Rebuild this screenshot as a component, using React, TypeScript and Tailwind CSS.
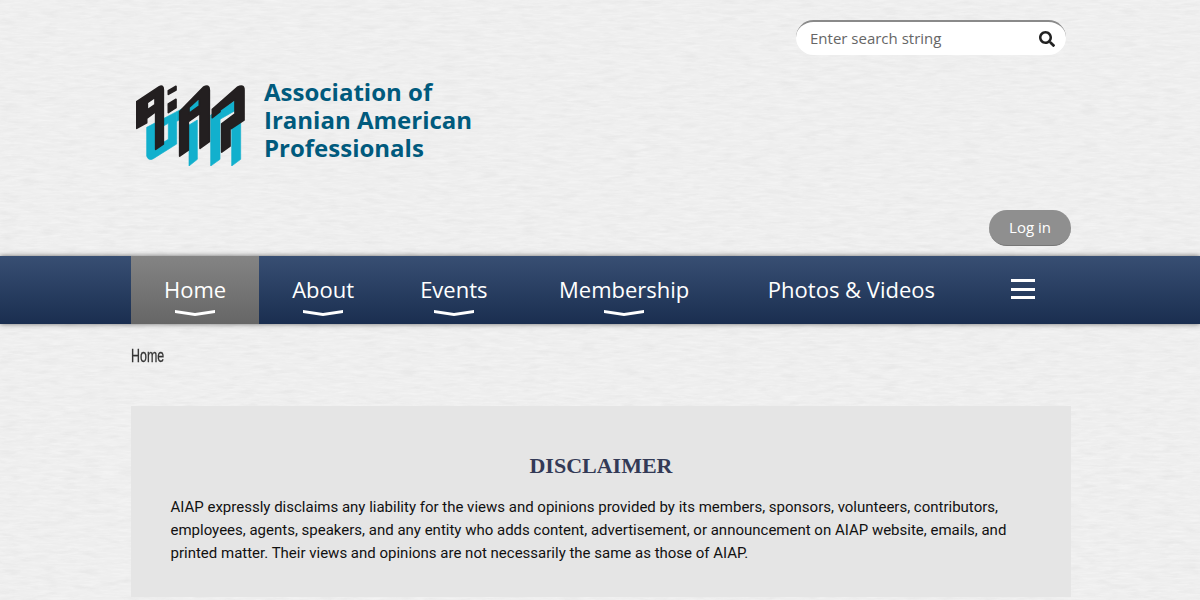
import { FaSearch } from "react-icons/fa";

const open = { fontFamily: '"Open Sans", sans-serif' };

function Chevron() {
  return (
    <svg width="40" height="6" viewBox="0 0 40 6" className="block">
      <polygon points="0,0 20,3 40,0 40,3 20,6 0,3" fill="#fff" />
    </svg>
  );
}

function Logo() {
  return (
    <svg width="109" height="82" viewBox="48 42 327 246" className="block shrink-0">
      <g fill="#12b0cd" stroke="#12b0cd" strokeWidth="2" strokeLinejoin="round">
        <path fillRule="evenodd" d="M80 172 L170 125 V222 L100 266 Q85 274 80 258 Z M105 182 V232 L145 208 V160 Z" />
        <polygon points="170,125 240,88 240,116 170,154" />
        <polygon points="207,165 232,150 232,268 207,288" />
        <polygon points="272,135 300,118 300,268 272,288" />
        <polygon points="300,120 345,92 345,122 300,148" />
        <polygon points="335,175 362,155 362,268 335,288" />
      </g>
      <g fill="#231f20" stroke="#231f20" strokeWidth="5" strokeLinejoin="round">
        <path fillRule="evenodd" d="M50 95 L118 50 Q130 44 130 60 V222 L107 238 V125 L80 145 V158 L50 175 Z M82 98 V120 L105 104 V82 Z" />
        <polygon points="145,62 168,49 168,60 145,73" />
        <polygon points="145,102 168,88 168,113 145,128" />
        <path fillRule="evenodd" d="M179 125 L250 52 Q268 42 268 60 V215 L240 235 V130 L205 155 V240 L179 258 Z M207 112 V130 L238 108 V84 Z" />
        <path d="M277 118 L352 52 Q372 42 372 60 V150 L330 178 V228 L305 246 V162 L345 132 V88 L300 120 V125 L277 143 Z" />
      </g>
    </svg>
  );
}

const items = [
  { t: "Home", active: true, chev: true, cls: "" },
  { t: "About", chev: true, cls: "" },
  { t: "Events", chev: true, cls: "" },
  { t: "Membership", chev: true, cls: "ml-[5.5px]" },
  { t: "Photos & Videos", chev: false, cls: "ml-[12.5px]" },
];

export default function App() {
  return (
    <div className="relative isolate h-[600px] w-full overflow-hidden bg-[#eeeeee]">
      <svg className="absolute inset-0 -z-10 h-full w-full" aria-hidden="true">
        <filter id="paper">
          <feTurbulence type="fractalNoise" baseFrequency="0.06 0.45" numOctaves="4" seed="7" />
          <feColorMatrix values="0 0 0 0 1  0 0 0 0 1  0 0 0 0 1  0.7 0 0 0 -0.28" />
        </filter>
        <filter id="paper2">
          <feTurbulence type="fractalNoise" baseFrequency="0.05 0.2" numOctaves="3" seed="21" />
          <feColorMatrix values="0 0 0 0 0.6  0 0 0 0 0.6  0 0 0 0 0.6  0.45 0 0 0 -0.22" />
        </filter>
        <rect width="100%" height="100%" filter="url(#paper)" />
        <rect width="100%" height="100%" filter="url(#paper2)" />
      </svg>

      <header className="ml-[131px] h-[256px] w-[940px] pt-[20px]" style={open}>
        <div className="flex justify-end pr-[5px]">
          <div className="flex h-[35px] w-[270px] items-center justify-between rounded-[18px] border-t-2 border-[#8a8a8a] bg-white pl-[14px] pr-[11px]">
            <span className="text-[15px] text-[#666666]">Enter search string</span>
            <FaSearch className="text-[16px] text-[#222222]" />
          </div>
        </div>
        <div className="mt-[29px] flex items-start pl-[5px]">
          <Logo />
          <div className="ml-[19px] mt-[-6px] text-[24px] font-bold leading-[28px] text-[#005a7d]">
            Association of
            <br />
            Iranian American
            <br />
            Professionals
          </div>
        </div>
        <div className="mt-[44px] flex justify-end">
          <div className="flex h-[36px] w-[82px] items-center justify-center rounded-[18px] border-b border-[#777777] bg-[#8f8f8f] text-[15px] text-white">
            Log in
          </div>
        </div>
      </header>

      <nav className="h-[68px] bg-gradient-to-b from-[#384f73] to-[#1a2e50] shadow-[0_0_5px_rgba(0,0,0,0.55)]" style={open}>
        <div className="ml-[131px] flex h-full w-[940px]">
          {items.map((i) => (
            <div
              key={i.t}
              className={`flex h-full flex-col items-center px-[33px] pt-[18px] ${i.cls} ${
                i.active ? "bg-gradient-to-b from-[#848484] to-[#666666]" : ""
              }`}
            >
              <span className="text-[22px] leading-[30px] text-white">{i.t}</span>
              {i.chev && (
                <span className="mt-[6px]">
                  <Chevron />
                </span>
              )}
            </div>
          ))}
          <div className="ml-[43px] mt-[23px] flex h-[20px] w-[24px] flex-col justify-between">
            <span className="h-[3px] bg-white" />
            <span className="h-[3px] bg-white" />
            <span className="h-[3px] bg-white" />
          </div>
        </div>
      </nav>

      <main className="ml-[131px] w-[940px]">
        <div
          className="mt-[20px] h-[24px] text-[18px] font-medium leading-[24px] text-[#333333]"
          style={{ fontFamily: '"Liberation Sans", sans-serif', WebkitTextStroke: "0.3px #333333" }}
        >
          <span className="inline-block origin-left scale-x-[0.69]">Home</span>
        </div>
        <section className="mt-[38px] h-[191px] bg-[#e5e5e5] px-[39.5px] pt-[46px]">
          <h1
            className="text-center text-[22px] font-bold leading-[28px] text-[#333a56]"
            style={{ fontFamily: '"Liberation Serif", serif' }}
          >
            DISCLAIMER
          </h1>
          <p
            className="mt-[16px] text-[15px] leading-[23px] text-[#111111]"
            style={{ fontFamily: "Roboto, sans-serif" }}
          >
            AIAP expressly disclaims any liability for the views and opinions provided by its members, sponsors, volunteers, contributors, employees, agents, speakers, and any entity who adds content, advertisement, or announcement on AIAP website, emails, and printed matter. Their views and opinions are not necessarily the same as those of AIAP.
          </p>
        </section>
      </main>
    </div>
  );
}
